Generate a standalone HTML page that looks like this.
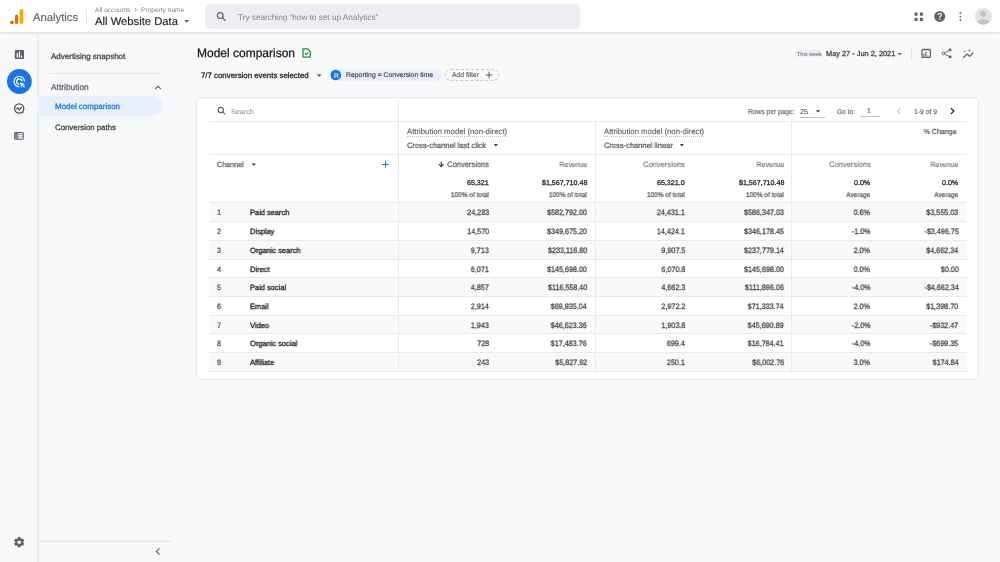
<!DOCTYPE html>
<html><head><meta charset="utf-8"><title>Model comparison - Analytics</title>
<style>
html,body{margin:0;padding:0;}
body{width:1000px;height:562px;overflow:hidden;position:relative;background:#f8f9fa;font-family:"Liberation Sans", sans-serif;}
.t{position:absolute;white-space:nowrap;line-height:normal;text-rendering:geometricPrecision;will-change:transform;}
svg{overflow:visible;}
</style></head><body>
<div style="position:absolute;left:0px;top:0px;width:1000px;height:32px;background:#fff;border-bottom:1px solid #e3e5e8;box-shadow:0 1px 1.5px rgba(60,64,67,0.10);"></div>
<svg style="position:absolute;left:8px;top:6px" width="18" height="20" viewBox="8 6 18 20"><circle cx="12" cy="22.3" r="1.9" fill="#e37400"/><rect x="15" y="14.5" width="3.2" height="9.6" rx="1.6" fill="#e37400"/><rect x="19.7" y="8.9" width="3.6" height="15.2" rx="1.8" fill="#f9ab00"/></svg>
<div class="t" style="left:33px;top:12px;font-size:11.25px;color:#5f6368;-webkit-text-stroke:0.14px #5f6368;">Analytics</div>
<div style="position:absolute;left:86px;top:9px;width:1px;height:15px;background:#e3e5e8;"></div>
<div class="t" style="left:95px;top:7px;font-size:6.60px;color:#80868b;font-weight:normal;">All accounts</div>
<svg style="position:absolute;left:133px;top:6px" width="6" height="7" viewBox="133 6 6 7"><path d="M134.9 7.9 L136.6 9.6 L134.9 11.3" stroke="#80868b" stroke-width="0.9" fill="none"/></svg>
<div class="t" style="left:140.5px;top:7px;font-size:6.60px;color:#80868b;font-weight:normal;">Property name</div>
<div class="t" style="left:95px;top:16px;font-size:11.25px;color:#202124;-webkit-text-stroke:0.14px #202124;">All Website Data</div>
<svg style="position:absolute;left:183px;top:18px" width="8" height="5" viewBox="183 18 8 5"><path d="M184.2 19.9 L189.2 19.9 L186.7 22.7 Z" fill="#5f6368"/></svg>
<div style="position:absolute;left:205px;top:4px;width:375px;height:25px;background:#eceef1;border-radius:5px;"></div>
<svg style="position:absolute;left:215px;top:11px" width="13" height="12" viewBox="215 11 13 12"><circle cx="220.3" cy="15.6" r="2.9" stroke="#5f6368" stroke-width="1.2" fill="none"/><path d="M222.4 17.7 L225.6 20.9" stroke="#5f6368" stroke-width="1.3"/></svg>
<div class="t" style="left:237.5px;top:13px;font-size:8.20px;color:#80868b;font-weight:normal;">Try searching “how to set up Analytics”</div>
<svg style="position:absolute;left:912px;top:10px" width="14" height="14" viewBox="912 10 14 14"><rect x="914.5" y="12.6" width="3.1" height="3.1" rx="0.3" fill="#5f6368"/><rect x="914.5" y="17.8" width="3.1" height="3.1" rx="0.3" fill="#5f6368"/><rect x="919.8" y="12.6" width="3.1" height="3.1" rx="0.3" fill="#5f6368"/><rect x="919.8" y="17.8" width="3.1" height="3.1" rx="0.3" fill="#5f6368"/></svg>
<svg style="position:absolute;left:932px;top:9px" width="15" height="15" viewBox="932 9 15 15"><circle cx="939.7" cy="16.4" r="5.5" fill="#5f6368"/><path d="M938.1 15.1 Q938.1 13.2 939.8 13.2 Q941.4 13.2 941.4 14.7 Q941.4 15.6 940.4 16.2 Q939.8 16.6 939.8 17.7" stroke="#fff" stroke-width="1.1" fill="none"/><circle cx="939.8" cy="19.3" r="0.7" fill="#fff"/></svg>
<svg style="position:absolute;left:957px;top:10px" width="7" height="13" viewBox="957 10 7 13"><circle cx="960.4" cy="13.2" r="0.95" fill="#5f6368"/><circle cx="960.4" cy="16.6" r="0.95" fill="#5f6368"/><circle cx="960.4" cy="20" r="0.95" fill="#5f6368"/></svg>
<svg style="position:absolute;left:974px;top:7px" width="19" height="19" viewBox="974 7 19 19"><defs><clipPath id="av"><circle cx="983.3" cy="16.4" r="8.4"/></clipPath></defs><circle cx="983.3" cy="16.4" r="8.4" fill="#e3e3e3"/><g clip-path="url(#av)"><circle cx="983.3" cy="14.1" r="2.9" fill="#c4c4c4"/><ellipse cx="983.3" cy="23.3" rx="6" ry="4.2" fill="#c4c4c4"/></g></svg>
<div style="position:absolute;left:37px;top:33px;width:2px;height:529px;background:#eceef1;"></div>
<svg style="position:absolute;left:13px;top:48px" width="13" height="13" viewBox="13 48 13 13"><rect x="14.8" y="49.9" width="9.2" height="9.2" rx="1" fill="#5f6368"/><rect x="16.6" y="53.3" width="1.3" height="4.3" fill="#fff"/><rect x="18.8" y="51.6" width="1.3" height="6" fill="#fff"/><rect x="21" y="55.6" width="1.3" height="2" fill="#fff"/></svg>
<svg style="position:absolute;left:6px;top:68px" width="28" height="28" viewBox="6 68 28 28"><circle cx="19.4" cy="81.5" r="12.4" fill="#1a73e8"/><path d="M24.5 81.6 A5.2 5.2 0 1 0 19.3 86.8" stroke="#fff" stroke-width="1.15" fill="none"/><path d="M22 81.6 A2.7 2.7 0 1 0 19.3 84.3" stroke="#fff" stroke-width="1.15" fill="none"/><path d="M19.9 82.2 L25.1 84.2 L23.1 85 L25 86.9 L24.1 87.8 L22.2 85.9 L21.5 87.8 Z" fill="#fff"/></svg>
<svg style="position:absolute;left:12px;top:101px" width="15" height="15" viewBox="12 101 15 15"><circle cx="19.2" cy="108.5" r="4.6" stroke="#4d5156" stroke-width="1.35" fill="none"/><path d="M16.4 109.3 L17.8 108 L19.1 109.9 L21.3 107.7" stroke="#4d5156" stroke-width="1.25" fill="none"/><circle cx="21.4" cy="107.6" r="0.8" fill="#4d5156"/><path d="M22.3 111.5 L24 113.1 L22 113.3 Z" fill="#4d5156"/></svg>
<svg style="position:absolute;left:13px;top:130px" width="13" height="12" viewBox="13 130 13 12"><rect x="14.6" y="132.5" width="8.7" height="6.8" rx="0.9" stroke="#5f6368" stroke-width="1.05" fill="#fff"/><path d="M17.7 132.5 V139.3" stroke="#5f6368" stroke-width="1"/><path d="M14.6 134.7 H23.3 M14.6 136.9 H23.3" stroke="#80868b" stroke-width="0.8"/><rect x="15.1" y="133" width="2.1" height="5.8" fill="#80868b"/></svg>
<svg style="position:absolute;left:12px;top:535px" width="15" height="15" viewBox="12 535 15 15"><path d="M17.83 537.08 L20.57 537.08 L20.70 538.49 L21.66 539.05 L22.95 538.45 L24.32 540.83 L23.16 541.64 L23.16 542.76 L24.32 543.57 L22.95 545.95 L21.66 545.35 L20.70 545.91 L20.57 547.32 L17.83 547.32 L17.70 545.91 L16.74 545.35 L15.45 545.95 L14.08 543.57 L15.24 542.76 L15.24 541.64 L14.08 540.83 L15.45 538.45 L16.74 539.05 L17.70 538.49 Z" fill="#5f6368"/><circle cx="19.2" cy="542.2" r="1.8" fill="#f8f9fa"/></svg>
<div class="t" style="left:51px;top:52px;font-size:8.00px;color:#3c4043;-webkit-text-stroke:0.27px #3c4043;">Advertising snapshot</div>
<div style="position:absolute;left:49px;top:72.5px;width:112px;height:1px;background:#e3e5e8;"></div>
<div class="t" style="left:51px;top:82px;font-size:8.40px;color:#5f6368;-webkit-text-stroke:0.27px #5f6368;">Attribution</div>
<svg style="position:absolute;left:152px;top:84px" width="11" height="8" viewBox="152 84 11 8"><path d="M155 89.2 L158 86.3 L161 89.2" stroke="#5f6368" stroke-width="1.1" fill="none"/></svg>
<div style="position:absolute;left:38px;top:96px;width:125px;height:20px;background:#e8f0fe;border-radius:0 10px 10px 0;"></div>
<div class="t" style="left:55px;top:102px;font-size:7.96px;color:#1a73e8;-webkit-text-stroke:0.27px #1a73e8;">Model comparison</div>
<div class="t" style="left:55px;top:123px;font-size:7.83px;color:#3c4043;-webkit-text-stroke:0.27px #3c4043;">Conversion paths</div>
<div style="position:absolute;left:39px;top:541px;width:132px;height:1px;background:#e3e5e8;"></div>
<svg style="position:absolute;left:153px;top:546px" width="10" height="11" viewBox="153 546 10 11"><path d="M159.6 548.4 L156.3 551.5 L159.6 554.6" stroke="#5f6368" stroke-width="1.1" fill="none"/></svg>
<div class="t" style="left:197px;top:46px;font-size:12.00px;color:#202124;-webkit-text-stroke:0.27px #202124;">Model comparison</div>
<svg style="position:absolute;left:300px;top:46px" width="14" height="14" viewBox="300 46 14 14"><path d="M303 48.8 L307.6 48.8 L310.4 51.6 L310.4 56.4 Q310.4 57.2 309.6 57.2 L303.8 57.2 Q303 57.2 303 56.4 Z" stroke="#1e8e3e" stroke-width="1.3" fill="none" stroke-linejoin="round"/><path d="M304.8 53.4 L306.2 54.7 L308.5 52.3" stroke="#1e8e3e" stroke-width="1.2" fill="none"/></svg>
<div class="t" style="left:201px;top:71px;font-size:7.85px;color:#202124;-webkit-text-stroke:0.27px #202124;">7/7 conversion events selected</div>
<svg style="position:absolute;left:314px;top:72px" width="10" height="6" viewBox="314 72 10 6"><path d="M316.7 74.2 L321.7 74.2 L319.2 77.0 Z" fill="#5f6368"/></svg>
<div style="position:absolute;left:331px;top:69px;width:111px;height:12px;background:#e8f0fe;border-radius:6px;"></div>
<svg style="position:absolute;left:329px;top:68px" width="14" height="14" viewBox="329 68 14 14"><circle cx="335.8" cy="75" r="5.3" fill="#1a73e8"/></svg>
<div class="t" style="left:333.5px;top:73px;font-size:6.60px;color:#fff;-webkit-text-stroke:0.14px #fff;">R</div>
<div class="t" style="left:346px;top:72px;font-size:6.87px;color:#3c4043;-webkit-text-stroke:0.14px #3c4043;">Reporting = Conversion time</div>
<div style="position:absolute;left:445px;top:69px;width:54px;height:12px;border:1px dashed #c8cbcf;border-radius:6px;box-sizing:border-box;"></div>
<div class="t" style="left:452px;top:72px;font-size:6.84px;color:#5f6368;-webkit-text-stroke:0.14px #5f6368;">Add filter</div>
<svg style="position:absolute;left:484px;top:70px" width="10" height="10" viewBox="484 70 10 10"><path d="M489.1 71.8 L489.1 78.2 M485.9 75 L492.3 75" stroke="#5f6368" stroke-width="1.1"/></svg>
<div style="position:absolute;left:795px;top:50px;width:27px;height:7px;background:#eceef1;border-radius:2px;"></div>
<div class="t" style="left:796.5px;top:52px;font-size:5.50px;color:#5f6368;font-weight:normal;">This week</div>
<div class="t" style="left:826px;top:49px;font-size:7.39px;color:#3c4043;-webkit-text-stroke:0.27px #3c4043;">May 27 - Jun 2, 2021</div>
<svg style="position:absolute;left:896px;top:51px" width="8" height="6" viewBox="896 51 8 6"><path d="M897.7 53.1 L901.7 53.1 L899.7 55.4 Z" fill="#5f6368"/></svg>
<div style="position:absolute;left:911px;top:47px;width:1px;height:13px;background:#e3e5e8;"></div>
<svg style="position:absolute;left:919px;top:47px" width="14" height="13" viewBox="919 47 14 13"><rect x="921.9" y="49.5" width="8.5" height="7.9" rx="1" stroke="#5f6368" stroke-width="1.3" fill="none"/><path d="M923.9 56.5 V53.6 M925.9 56.5 V51.8 M927.9 56.5 V55.4" stroke="#5f6368" stroke-width="1.1"/></svg>
<svg style="position:absolute;left:940px;top:47px" width="14" height="13" viewBox="940 47 14 13"><circle cx="950.1" cy="49.9" r="1.45" fill="#5f6368"/><circle cx="943.4" cy="53.4" r="1.3" stroke="#5f6368" stroke-width="1" fill="none"/><circle cx="950.1" cy="57" r="1.45" fill="#5f6368"/><path d="M944.6 52.8 L949.2 50.4 M944.6 54 L949.2 56.5" stroke="#5f6368" stroke-width="1"/></svg>
<svg style="position:absolute;left:961px;top:47px" width="15" height="13" viewBox="961 47 15 13"><path d="M963.6 57.3 L967.2 54 L969.6 56.4 L973 53" stroke="#5f6368" stroke-width="1.25" fill="none" stroke-linecap="round"/><circle cx="964.8" cy="51.6" r="0.75" fill="#5f6368"/><path d="M969.3 49 L969.8 50 L970.7 50.4 L969.8 50.8 L969.3 51.8 L968.8 50.8 L967.9 50.4 L968.8 50 Z" fill="#5f6368"/></svg>
<div style="position:absolute;left:196px;top:96.5px;width:783px;height:283px;background:#fff;border:1px solid #e6e8eb;border-radius:6px;box-sizing:border-box;"></div>
<svg style="position:absolute;left:215px;top:104px" width="13" height="13" viewBox="215 104 13 13"><circle cx="220.8" cy="110" r="2.6" stroke="#5f6368" stroke-width="1.15" fill="none"/><path d="M222.7 111.9 L225.2 114.4" stroke="#5f6368" stroke-width="1.25"/></svg>
<div class="t" style="left:231px;top:107px;font-size:7.20px;color:#9aa0a6;-webkit-text-stroke:0.14px #9aa0a6;">Search</div>
<div class="t" style="left:748px;top:107px;font-size:7.32px;color:#5f6368;-webkit-text-stroke:0.14px #5f6368;transform:scaleX(0.9091);transform-origin:left center;">Rows per page:</div>
<div class="t" style="left:800px;top:107px;font-size:7.20px;color:#3c4043;font-weight:normal;">25</div>
<svg style="position:absolute;left:814px;top:108px" width="8" height="6" viewBox="814 108 8 6"><path d="M815.8 110.2 L820.2 110.2 L818 112.60000000000001 Z" fill="#3c4043"/></svg>
<div style="position:absolute;left:799.5px;top:117px;width:25px;height:1px;background:#bdc1c6;"></div>
<div class="t" style="left:837px;top:108px;font-size:7.13px;color:#5f6368;-webkit-text-stroke:0.14px #5f6368;transform:scaleX(0.9259);transform-origin:left center;">Go to:</div>
<div class="t" style="left:867px;top:108px;font-size:6.80px;color:#5f6368;-webkit-text-stroke:0.14px #5f6368;">1</div>
<div style="position:absolute;left:860px;top:116px;width:20px;height:1px;background:#bdc1c6;"></div>
<svg style="position:absolute;left:895px;top:106px" width="8" height="10" viewBox="895 106 8 10"><path d="M900.4 108 L897.6 111 L900.4 114" stroke="#9aa0a6" stroke-width="0.9" fill="none"/></svg>
<div class="t" style="left:914px;top:109px;font-size:6.81px;color:#5f6368;-webkit-text-stroke:0.14px #5f6368;">1-9 of 9</div>
<svg style="position:absolute;left:948px;top:106px" width="9" height="10" viewBox="948 106 9 10"><path d="M950.9 108.2 L953.9 111.1 L950.9 114" stroke="#202124" stroke-width="1.2" fill="none"/></svg>
<div class="t" style="left:407px;top:127px;font-size:7.78px;color:#5f6368;-webkit-text-stroke:0.14px #5f6368;">Attribution model (non-direct)</div>
<div style="position:absolute;left:407px;top:135.5px;width:100px;border-top:1px dotted #bdc1c6;"></div>
<div class="t" style="left:407px;top:141px;font-size:7.90px;color:#3c4043;-webkit-text-stroke:0.14px #3c4043;transform:scaleX(0.9524);transform-origin:left center;">Cross-channel last click</div>
<svg style="position:absolute;left:491px;top:142px" width="9" height="7" viewBox="491 142 9 7"><path d="M493.79999999999995 144 L498.0 144 L495.9 146.5 Z" fill="#3c4043"/></svg>
<div class="t" style="left:604px;top:127px;font-size:7.78px;color:#5f6368;-webkit-text-stroke:0.14px #5f6368;">Attribution model (non-direct)</div>
<div style="position:absolute;left:604px;top:135.5px;width:100px;border-top:1px dotted #bdc1c6;"></div>
<div class="t" style="left:604px;top:141px;font-size:7.90px;color:#3c4043;-webkit-text-stroke:0.14px #3c4043;transform:scaleX(0.9524);transform-origin:left center;">Cross-channel linear</div>
<svg style="position:absolute;left:677px;top:142px" width="9" height="7" viewBox="677 142 9 7"><path d="M679.6999999999999 144 L683.9 144 L681.8 146.5 Z" fill="#3c4043"/></svg>
<div class="t" style="right:43px;text-align:right;top:127px;font-size:7.40px;color:#3c4043;-webkit-text-stroke:0.14px #3c4043;transform:scaleX(0.9524);transform-origin:right center;">% Change</div>
<div class="t" style="left:217px;top:160px;font-size:7.53px;color:#5f6368;-webkit-text-stroke:0.27px #5f6368;transform:scaleX(0.9524);transform-origin:left center;">Channel</div>
<svg style="position:absolute;left:249px;top:161px" width="9" height="7" viewBox="249 161 9 7"><path d="M251.70000000000002 163.5 L255.9 163.5 L253.8 166.0 Z" fill="#3c4043"/></svg>
<svg style="position:absolute;left:380px;top:159px" width="11" height="11" viewBox="380 159 11 11"><path d="M385.5 161.2 L385.5 167.8 M382.2 164.5 L388.8 164.5" stroke="#1a73e8" stroke-width="1.1"/></svg>
<svg style="position:absolute;left:436px;top:159px" width="10" height="10" viewBox="436 159 10 10"><path d="M441.2 161.6 L441.2 166.4 M438.8 164.2 L441.2 166.6 L443.6 164.2" stroke="#3c4043" stroke-width="1.1" fill="none"/></svg>
<div class="t" style="right:511px;text-align:right;top:160px;font-size:7.90px;color:#5f6368;-webkit-text-stroke:0.27px #5f6368;transform:scaleX(0.9524);transform-origin:right center;">Conversions</div>
<div class="t" style="right:413px;text-align:right;top:160px;font-size:7.37px;color:#70757a;-webkit-text-stroke:0.14px #70757a;transform:scaleX(0.9524);transform-origin:right center;">Revenue</div>
<div class="t" style="right:315px;text-align:right;top:160px;font-size:7.90px;color:#70757a;-webkit-text-stroke:0.14px #70757a;transform:scaleX(0.9524);transform-origin:right center;">Conversions</div>
<div class="t" style="right:216px;text-align:right;top:160px;font-size:7.37px;color:#70757a;-webkit-text-stroke:0.14px #70757a;transform:scaleX(0.9524);transform-origin:right center;">Revenue</div>
<div class="t" style="right:129.5px;text-align:right;top:160px;font-size:7.90px;color:#70757a;-webkit-text-stroke:0.14px #70757a;transform:scaleX(0.9524);transform-origin:right center;">Conversions</div>
<div class="t" style="right:41.5px;text-align:right;top:160px;font-size:7.37px;color:#70757a;-webkit-text-stroke:0.14px #70757a;transform:scaleX(0.9524);transform-origin:right center;">Revenue</div>
<div class="t" style="right:511px;text-align:right;top:179px;font-size:7.10px;color:#202124;-webkit-text-stroke:0.27px #202124;">65,321</div>
<div class="t" style="right:511px;text-align:right;top:192px;font-size:6.83px;color:#5f6368;-webkit-text-stroke:0.27px #5f6368;transform:scaleX(0.9524);transform-origin:right center;">100% of total</div>
<div class="t" style="right:413px;text-align:right;top:179px;font-size:7.10px;color:#202124;-webkit-text-stroke:0.27px #202124;">$1,567,710.48</div>
<div class="t" style="right:413px;text-align:right;top:192px;font-size:6.83px;color:#5f6368;-webkit-text-stroke:0.27px #5f6368;transform:scaleX(0.9524);transform-origin:right center;">100% of total</div>
<div class="t" style="right:315px;text-align:right;top:179px;font-size:7.10px;color:#202124;-webkit-text-stroke:0.27px #202124;">65,321.0</div>
<div class="t" style="right:315px;text-align:right;top:192px;font-size:6.83px;color:#5f6368;-webkit-text-stroke:0.27px #5f6368;transform:scaleX(0.9524);transform-origin:right center;">100% of total</div>
<div class="t" style="right:216px;text-align:right;top:179px;font-size:7.10px;color:#202124;-webkit-text-stroke:0.27px #202124;">$1,567,710.48</div>
<div class="t" style="right:216px;text-align:right;top:192px;font-size:6.83px;color:#5f6368;-webkit-text-stroke:0.27px #5f6368;transform:scaleX(0.9524);transform-origin:right center;">100% of total</div>
<div class="t" style="right:129.5px;text-align:right;top:179px;font-size:7.10px;color:#202124;-webkit-text-stroke:0.27px #202124;">0.0%</div>
<div class="t" style="right:129.5px;text-align:right;top:192px;font-size:6.83px;color:#5f6368;-webkit-text-stroke:0.27px #5f6368;transform:scaleX(0.9524);transform-origin:right center;">Average</div>
<div class="t" style="right:41.5px;text-align:right;top:179px;font-size:7.10px;color:#202124;-webkit-text-stroke:0.27px #202124;">0.0%</div>
<div class="t" style="right:41.5px;text-align:right;top:192px;font-size:6.83px;color:#5f6368;-webkit-text-stroke:0.27px #5f6368;transform:scaleX(0.9524);transform-origin:right center;">Average</div>
<div style="position:absolute;left:209px;top:203px;width:757.5px;height:18px;background:#f8f9fa;"></div>
<div style="position:absolute;left:209px;top:241px;width:757.5px;height:18px;background:#f8f9fa;"></div>
<div style="position:absolute;left:209px;top:278px;width:757.5px;height:18px;background:#f8f9fa;"></div>
<div style="position:absolute;left:209px;top:316px;width:757.5px;height:17px;background:#f8f9fa;"></div>
<div style="position:absolute;left:209px;top:353px;width:757.5px;height:18px;background:#f8f9fa;"></div>
<div style="position:absolute;left:209px;top:202px;width:757.5px;height:1px;background:#e8eaed;"></div>
<div style="position:absolute;left:209px;top:221px;width:757.5px;height:1px;background:#e8eaed;"></div>
<div style="position:absolute;left:209px;top:240px;width:757.5px;height:1px;background:#e8eaed;"></div>
<div style="position:absolute;left:209px;top:259px;width:757.5px;height:1px;background:#e8eaed;"></div>
<div style="position:absolute;left:209px;top:277px;width:757.5px;height:1px;background:#e8eaed;"></div>
<div style="position:absolute;left:209px;top:296px;width:757.5px;height:1px;background:#e8eaed;"></div>
<div style="position:absolute;left:209px;top:315px;width:757.5px;height:1px;background:#e8eaed;"></div>
<div style="position:absolute;left:209px;top:333px;width:757.5px;height:1px;background:#e8eaed;"></div>
<div style="position:absolute;left:209px;top:352px;width:757.5px;height:1px;background:#e8eaed;"></div>
<div style="position:absolute;left:209px;top:371px;width:757.5px;height:1px;background:#e8eaed;"></div>
<div style="position:absolute;left:209px;top:121px;width:757.5px;height:1px;background:#e8eaed;"></div>
<div style="position:absolute;left:398px;top:101px;width:1px;height:271px;background:#e8eaed;"></div>
<div style="position:absolute;left:595px;top:121px;width:1px;height:251px;background:#e8eaed;"></div>
<div style="position:absolute;left:791px;top:121px;width:1px;height:251px;background:#e8eaed;"></div>
<div style="position:absolute;left:209px;top:154px;width:757.5px;height:1px;background:#e8eaed;"></div>
<div class="t" style="left:217px;top:208px;font-size:7.78px;color:#3c4043;-webkit-text-stroke:0.2px #3c4043;transform:scaleX(0.9259);transform-origin:left center;">1</div>
<div class="t" style="left:250px;top:208px;font-size:7.68px;color:#202124;-webkit-text-stroke:0.32px #202124;transform:scaleX(0.9709);transform-origin:left center;">Paid search</div>
<div class="t" style="right:511px;text-align:right;top:208px;font-size:7.92px;color:#3c4043;-webkit-text-stroke:0.26px #3c4043;transform:scaleX(0.9091);transform-origin:right center;">24,283</div>
<div class="t" style="right:413px;text-align:right;top:208px;font-size:7.92px;color:#3c4043;-webkit-text-stroke:0.26px #3c4043;transform:scaleX(0.9091);transform-origin:right center;">$582,792.00</div>
<div class="t" style="right:315px;text-align:right;top:208px;font-size:7.92px;color:#3c4043;-webkit-text-stroke:0.26px #3c4043;transform:scaleX(0.9091);transform-origin:right center;">24,431.1</div>
<div class="t" style="right:216px;text-align:right;top:208px;font-size:7.92px;color:#3c4043;-webkit-text-stroke:0.26px #3c4043;transform:scaleX(0.9091);transform-origin:right center;">$586,347.03</div>
<div class="t" style="right:129.5px;text-align:right;top:208px;font-size:7.92px;color:#3c4043;-webkit-text-stroke:0.26px #3c4043;transform:scaleX(0.9091);transform-origin:right center;">0.6%</div>
<div class="t" style="right:41.5px;text-align:right;top:208px;font-size:7.92px;color:#3c4043;-webkit-text-stroke:0.26px #3c4043;transform:scaleX(0.9091);transform-origin:right center;">$3,555.03</div>
<div class="t" style="left:217px;top:227px;font-size:7.78px;color:#3c4043;-webkit-text-stroke:0.2px #3c4043;transform:scaleX(0.9259);transform-origin:left center;">2</div>
<div class="t" style="left:250px;top:227px;font-size:7.68px;color:#202124;-webkit-text-stroke:0.32px #202124;transform:scaleX(0.9709);transform-origin:left center;">Display</div>
<div class="t" style="right:511px;text-align:right;top:227px;font-size:7.92px;color:#3c4043;-webkit-text-stroke:0.26px #3c4043;transform:scaleX(0.9091);transform-origin:right center;">14,570</div>
<div class="t" style="right:413px;text-align:right;top:227px;font-size:7.92px;color:#3c4043;-webkit-text-stroke:0.26px #3c4043;transform:scaleX(0.9091);transform-origin:right center;">$349,675.20</div>
<div class="t" style="right:315px;text-align:right;top:227px;font-size:7.92px;color:#3c4043;-webkit-text-stroke:0.26px #3c4043;transform:scaleX(0.9091);transform-origin:right center;">14,424.1</div>
<div class="t" style="right:216px;text-align:right;top:227px;font-size:7.92px;color:#3c4043;-webkit-text-stroke:0.26px #3c4043;transform:scaleX(0.9091);transform-origin:right center;">$346,178.45</div>
<div class="t" style="right:129.5px;text-align:right;top:227px;font-size:7.92px;color:#3c4043;-webkit-text-stroke:0.26px #3c4043;transform:scaleX(0.9091);transform-origin:right center;">-1.0%</div>
<div class="t" style="right:41.5px;text-align:right;top:227px;font-size:7.92px;color:#3c4043;-webkit-text-stroke:0.26px #3c4043;transform:scaleX(0.9091);transform-origin:right center;">-$3,496.75</div>
<div class="t" style="left:217px;top:246px;font-size:7.78px;color:#3c4043;-webkit-text-stroke:0.2px #3c4043;transform:scaleX(0.9259);transform-origin:left center;">3</div>
<div class="t" style="left:250px;top:246px;font-size:7.68px;color:#202124;-webkit-text-stroke:0.32px #202124;transform:scaleX(0.9709);transform-origin:left center;">Organic search</div>
<div class="t" style="right:511px;text-align:right;top:246px;font-size:7.92px;color:#3c4043;-webkit-text-stroke:0.26px #3c4043;transform:scaleX(0.9091);transform-origin:right center;">9,713</div>
<div class="t" style="right:413px;text-align:right;top:246px;font-size:7.92px;color:#3c4043;-webkit-text-stroke:0.26px #3c4043;transform:scaleX(0.9091);transform-origin:right center;">$233,116.80</div>
<div class="t" style="right:315px;text-align:right;top:246px;font-size:7.92px;color:#3c4043;-webkit-text-stroke:0.26px #3c4043;transform:scaleX(0.9091);transform-origin:right center;">9,907.5</div>
<div class="t" style="right:216px;text-align:right;top:246px;font-size:7.92px;color:#3c4043;-webkit-text-stroke:0.26px #3c4043;transform:scaleX(0.9091);transform-origin:right center;">$237,779.14</div>
<div class="t" style="right:129.5px;text-align:right;top:246px;font-size:7.92px;color:#3c4043;-webkit-text-stroke:0.26px #3c4043;transform:scaleX(0.9091);transform-origin:right center;">2.0%</div>
<div class="t" style="right:41.5px;text-align:right;top:246px;font-size:7.92px;color:#3c4043;-webkit-text-stroke:0.26px #3c4043;transform:scaleX(0.9091);transform-origin:right center;">$4,662.34</div>
<div class="t" style="left:217px;top:265px;font-size:7.78px;color:#3c4043;-webkit-text-stroke:0.2px #3c4043;transform:scaleX(0.9259);transform-origin:left center;">4</div>
<div class="t" style="left:250px;top:265px;font-size:7.68px;color:#202124;-webkit-text-stroke:0.32px #202124;transform:scaleX(0.9709);transform-origin:left center;">Direct</div>
<div class="t" style="right:511px;text-align:right;top:265px;font-size:7.92px;color:#3c4043;-webkit-text-stroke:0.26px #3c4043;transform:scaleX(0.9091);transform-origin:right center;">6,071</div>
<div class="t" style="right:413px;text-align:right;top:265px;font-size:7.92px;color:#3c4043;-webkit-text-stroke:0.26px #3c4043;transform:scaleX(0.9091);transform-origin:right center;">$145,698.00</div>
<div class="t" style="right:315px;text-align:right;top:265px;font-size:7.92px;color:#3c4043;-webkit-text-stroke:0.26px #3c4043;transform:scaleX(0.9091);transform-origin:right center;">6,070.8</div>
<div class="t" style="right:216px;text-align:right;top:265px;font-size:7.92px;color:#3c4043;-webkit-text-stroke:0.26px #3c4043;transform:scaleX(0.9091);transform-origin:right center;">$145,698.00</div>
<div class="t" style="right:129.5px;text-align:right;top:265px;font-size:7.92px;color:#3c4043;-webkit-text-stroke:0.26px #3c4043;transform:scaleX(0.9091);transform-origin:right center;">0.0%</div>
<div class="t" style="right:41.5px;text-align:right;top:265px;font-size:7.92px;color:#3c4043;-webkit-text-stroke:0.26px #3c4043;transform:scaleX(0.9091);transform-origin:right center;">$0.00</div>
<div class="t" style="left:217px;top:283px;font-size:7.78px;color:#3c4043;-webkit-text-stroke:0.2px #3c4043;transform:scaleX(0.9259);transform-origin:left center;">5</div>
<div class="t" style="left:250px;top:283px;font-size:7.68px;color:#202124;-webkit-text-stroke:0.32px #202124;transform:scaleX(0.9709);transform-origin:left center;">Paid social</div>
<div class="t" style="right:511px;text-align:right;top:283px;font-size:7.92px;color:#3c4043;-webkit-text-stroke:0.26px #3c4043;transform:scaleX(0.9091);transform-origin:right center;">4,857</div>
<div class="t" style="right:413px;text-align:right;top:283px;font-size:7.92px;color:#3c4043;-webkit-text-stroke:0.26px #3c4043;transform:scaleX(0.9091);transform-origin:right center;">$116,558.40</div>
<div class="t" style="right:315px;text-align:right;top:283px;font-size:7.92px;color:#3c4043;-webkit-text-stroke:0.26px #3c4043;transform:scaleX(0.9091);transform-origin:right center;">4,662.3</div>
<div class="t" style="right:216px;text-align:right;top:283px;font-size:7.92px;color:#3c4043;-webkit-text-stroke:0.26px #3c4043;transform:scaleX(0.9091);transform-origin:right center;">$111,896.06</div>
<div class="t" style="right:129.5px;text-align:right;top:283px;font-size:7.92px;color:#3c4043;-webkit-text-stroke:0.26px #3c4043;transform:scaleX(0.9091);transform-origin:right center;">-4.0%</div>
<div class="t" style="right:41.5px;text-align:right;top:283px;font-size:7.92px;color:#3c4043;-webkit-text-stroke:0.26px #3c4043;transform:scaleX(0.9091);transform-origin:right center;">-$4,662.34</div>
<div class="t" style="left:217px;top:302px;font-size:7.78px;color:#3c4043;-webkit-text-stroke:0.2px #3c4043;transform:scaleX(0.9259);transform-origin:left center;">6</div>
<div class="t" style="left:250px;top:302px;font-size:7.68px;color:#202124;-webkit-text-stroke:0.32px #202124;transform:scaleX(0.9709);transform-origin:left center;">Email</div>
<div class="t" style="right:511px;text-align:right;top:302px;font-size:7.92px;color:#3c4043;-webkit-text-stroke:0.26px #3c4043;transform:scaleX(0.9091);transform-origin:right center;">2,914</div>
<div class="t" style="right:413px;text-align:right;top:302px;font-size:7.92px;color:#3c4043;-webkit-text-stroke:0.26px #3c4043;transform:scaleX(0.9091);transform-origin:right center;">$69,935.04</div>
<div class="t" style="right:315px;text-align:right;top:302px;font-size:7.92px;color:#3c4043;-webkit-text-stroke:0.26px #3c4043;transform:scaleX(0.9091);transform-origin:right center;">2,972.2</div>
<div class="t" style="right:216px;text-align:right;top:302px;font-size:7.92px;color:#3c4043;-webkit-text-stroke:0.26px #3c4043;transform:scaleX(0.9091);transform-origin:right center;">$71,333.74</div>
<div class="t" style="right:129.5px;text-align:right;top:302px;font-size:7.92px;color:#3c4043;-webkit-text-stroke:0.26px #3c4043;transform:scaleX(0.9091);transform-origin:right center;">2.0%</div>
<div class="t" style="right:41.5px;text-align:right;top:302px;font-size:7.92px;color:#3c4043;-webkit-text-stroke:0.26px #3c4043;transform:scaleX(0.9091);transform-origin:right center;">$1,398.70</div>
<div class="t" style="left:217px;top:321px;font-size:7.78px;color:#3c4043;-webkit-text-stroke:0.2px #3c4043;transform:scaleX(0.9259);transform-origin:left center;">7</div>
<div class="t" style="left:250px;top:321px;font-size:7.68px;color:#202124;-webkit-text-stroke:0.32px #202124;transform:scaleX(0.9709);transform-origin:left center;">Video</div>
<div class="t" style="right:511px;text-align:right;top:321px;font-size:7.92px;color:#3c4043;-webkit-text-stroke:0.26px #3c4043;transform:scaleX(0.9091);transform-origin:right center;">1,943</div>
<div class="t" style="right:413px;text-align:right;top:321px;font-size:7.92px;color:#3c4043;-webkit-text-stroke:0.26px #3c4043;transform:scaleX(0.9091);transform-origin:right center;">$46,623.36</div>
<div class="t" style="right:315px;text-align:right;top:321px;font-size:7.92px;color:#3c4043;-webkit-text-stroke:0.26px #3c4043;transform:scaleX(0.9091);transform-origin:right center;">1,903.8</div>
<div class="t" style="right:216px;text-align:right;top:321px;font-size:7.92px;color:#3c4043;-webkit-text-stroke:0.26px #3c4043;transform:scaleX(0.9091);transform-origin:right center;">$45,690.89</div>
<div class="t" style="right:129.5px;text-align:right;top:321px;font-size:7.92px;color:#3c4043;-webkit-text-stroke:0.26px #3c4043;transform:scaleX(0.9091);transform-origin:right center;">-2.0%</div>
<div class="t" style="right:41.5px;text-align:right;top:321px;font-size:7.92px;color:#3c4043;-webkit-text-stroke:0.26px #3c4043;transform:scaleX(0.9091);transform-origin:right center;">-$932.47</div>
<div class="t" style="left:217px;top:339px;font-size:7.78px;color:#3c4043;-webkit-text-stroke:0.2px #3c4043;transform:scaleX(0.9259);transform-origin:left center;">8</div>
<div class="t" style="left:250px;top:339px;font-size:7.68px;color:#202124;-webkit-text-stroke:0.32px #202124;transform:scaleX(0.9709);transform-origin:left center;">Organic social</div>
<div class="t" style="right:511px;text-align:right;top:339px;font-size:7.92px;color:#3c4043;-webkit-text-stroke:0.26px #3c4043;transform:scaleX(0.9091);transform-origin:right center;">728</div>
<div class="t" style="right:413px;text-align:right;top:339px;font-size:7.92px;color:#3c4043;-webkit-text-stroke:0.26px #3c4043;transform:scaleX(0.9091);transform-origin:right center;">$17,483.76</div>
<div class="t" style="right:315px;text-align:right;top:339px;font-size:7.92px;color:#3c4043;-webkit-text-stroke:0.26px #3c4043;transform:scaleX(0.9091);transform-origin:right center;">699.4</div>
<div class="t" style="right:216px;text-align:right;top:339px;font-size:7.92px;color:#3c4043;-webkit-text-stroke:0.26px #3c4043;transform:scaleX(0.9091);transform-origin:right center;">$16,784.41</div>
<div class="t" style="right:129.5px;text-align:right;top:339px;font-size:7.92px;color:#3c4043;-webkit-text-stroke:0.26px #3c4043;transform:scaleX(0.9091);transform-origin:right center;">-4.0%</div>
<div class="t" style="right:41.5px;text-align:right;top:339px;font-size:7.92px;color:#3c4043;-webkit-text-stroke:0.26px #3c4043;transform:scaleX(0.9091);transform-origin:right center;">-$699.35</div>
<div class="t" style="left:217px;top:358px;font-size:7.78px;color:#3c4043;-webkit-text-stroke:0.2px #3c4043;transform:scaleX(0.9259);transform-origin:left center;">9</div>
<div class="t" style="left:250px;top:358px;font-size:7.68px;color:#202124;-webkit-text-stroke:0.32px #202124;transform:scaleX(0.9709);transform-origin:left center;">Affiliate</div>
<div class="t" style="right:511px;text-align:right;top:358px;font-size:7.92px;color:#3c4043;-webkit-text-stroke:0.26px #3c4043;transform:scaleX(0.9091);transform-origin:right center;">243</div>
<div class="t" style="right:413px;text-align:right;top:358px;font-size:7.92px;color:#3c4043;-webkit-text-stroke:0.26px #3c4043;transform:scaleX(0.9091);transform-origin:right center;">$5,827.92</div>
<div class="t" style="right:315px;text-align:right;top:358px;font-size:7.92px;color:#3c4043;-webkit-text-stroke:0.26px #3c4043;transform:scaleX(0.9091);transform-origin:right center;">250.1</div>
<div class="t" style="right:216px;text-align:right;top:358px;font-size:7.92px;color:#3c4043;-webkit-text-stroke:0.26px #3c4043;transform:scaleX(0.9091);transform-origin:right center;">$6,002.76</div>
<div class="t" style="right:129.5px;text-align:right;top:358px;font-size:7.92px;color:#3c4043;-webkit-text-stroke:0.26px #3c4043;transform:scaleX(0.9091);transform-origin:right center;">3.0%</div>
<div class="t" style="right:41.5px;text-align:right;top:358px;font-size:7.92px;color:#3c4043;-webkit-text-stroke:0.26px #3c4043;transform:scaleX(0.9091);transform-origin:right center;">$174.84</div>
</body></html>
